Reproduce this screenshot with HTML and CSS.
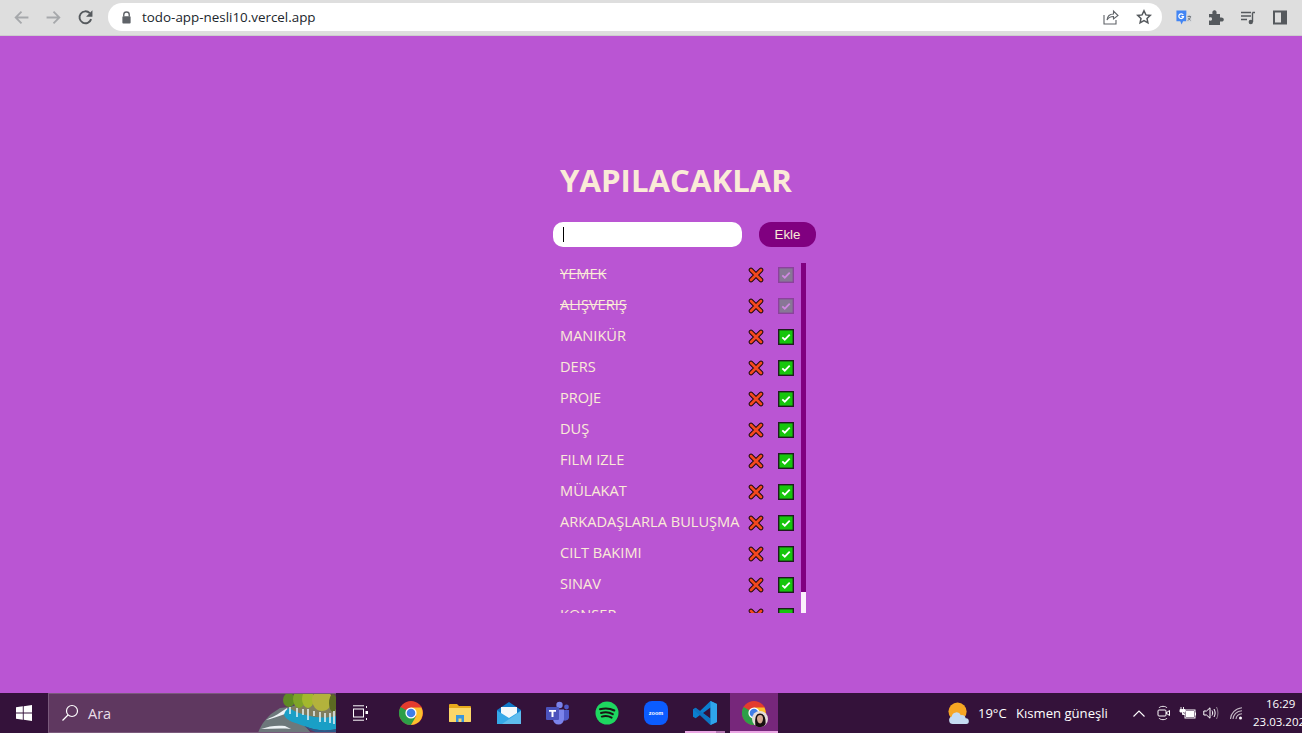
FILE: index.html
```html
<!DOCTYPE html>
<html lang="tr">
<head>
<meta charset="utf-8">
<title>Todo App</title>
<link rel="stylesheet" href="styles.css">
</head>
<body>
<svg class="defs" width="0" height="0" aria-hidden="true">
  <defs>
    <symbol id="x" viewBox="0 0 16 16">
      <path d="M3 3 13 13M13 3 3 13" fill="none" stroke="#1a0a0a" stroke-width="4.600" stroke-linecap="round"/>
      <path d="M3 3 13 13M13 3 3 13" fill="none" stroke="#f4481e" stroke-width="2.800" stroke-linecap="round"/>
    </symbol>
    <symbol id="check" viewBox="0 0 16 16">
      <rect x=".7" y=".7" width="14.600" height="14.600" fill="#16c60c" stroke="#1d1d1d" stroke-width="1.400"/>
      <path d="M4.300 8.300 6.800 10.700 11.700 5.600" fill="none" stroke="#fff" stroke-width="1.800"/>
    </symbol>
    <symbol id="chrome" viewBox="0 0 24 24">
      <circle cx="12" cy="12" r="12" fill="#e33b2e"/>
      <path d="M12 12 1.600 6A12 12 0 0 0 12 24l5-7z" fill="#2d9f48"/>
      <path d="M12 6.500h10.400A12 12 0 0 1 12 24l5.200-9z" fill="#fbc02d"/>
      <circle cx="12" cy="12" r="5.600" fill="#fff"/>
      <circle cx="12" cy="12" r="4.300" fill="#3f7ee8"/>
    </symbol>
  </defs>
</svg>

<div class="screen">
  <header class="toolbar">
    <div class="nav">
      <svg class="nav-icon" viewBox="0 0 16 16"><path d="M14.500 8H2.500M8 2.500 2.500 8 8 13.500" fill="none" stroke="#a6a8ab" stroke-width="1.700"/></svg>
      <svg class="nav-icon" viewBox="0 0 16 16"><path d="M1.500 8h12M8 2.500 13.500 8 8 13.500" fill="none" stroke="#a6a8ab" stroke-width="1.700"/></svg>
      <svg class="nav-icon" viewBox="0 0 16 16"><path d="M13.300 9.500A5.600 5.600 0 1 1 12 3.900" fill="none" stroke="#55595d" stroke-width="1.800"/><path d="M14.500 1.200v6h-6z" fill="#55595d"/></svg>
    </div>
    <div class="omnibox">
      <svg class="lock" viewBox="0 0 12 14"><path d="M3 6V4a3 3 0 0 1 6 0v2" fill="none" stroke="#5f6368" stroke-width="1.500"/><rect x="1.500" y="5.500" width="9" height="8" rx="1" fill="#5f6368"/></svg>
      <span class="url">todo-app-nesli10.vercel.app</span>
      <span class="spacer"></span>
      <svg class="omni-icon" viewBox="0 0 16 16"><path d="M1 6v9h12v-4" fill="none" stroke="#5f6368" stroke-width="1.100"/><path d="M4 11c.5-4 3.500-6 6.500-6V2L15 6.500 10.500 10V7.500C8 7.500 5.500 8.500 4 11z" fill="none" stroke="#5f6368" stroke-width="1.100"/></svg>
      <svg class="omni-icon" viewBox="0 0 16 16"><path d="m8 1.800 1.900 4.100 4.400.5-3.300 3 .9 4.400L8 11.600l-3.900 2.200.9-4.400-3.300-3 4.400-.5z" fill="none" stroke="#55595d" stroke-width="1.500"/></svg>
    </div>
    <div class="extensions">
      <svg class="ext" viewBox="0 0 16 18"><path d="M0 1.500h10.500V13H7l-1.500 3.500L4 13H0z" fill="#4285f4"/><path d="M10.500 6H16v8h-5.500z" fill="#d5d8dc"/><path d="M7.200 6.300A2.500 2.500 0 1 0 7.500 8H5.200" fill="none" stroke="#fff" stroke-width="1.300"/><path d="M11.800 8h3.500M13.500 7v1M15 8c-.3 2-1.800 3.500-3.200 4M12.500 9.500c.6 1 1.500 2 2.500 2.500" fill="none" stroke="#5f6368" stroke-width=".8"/></svg>
      <svg class="ext" viewBox="0 0 16 16"><path d="M1 4.500h3.500C4 1.500 5.300.8 6.500.8s2.500.7 2 3.700H12V8c3-.5 3.800.8 3.800 2s-.8 2.500-3.800 2v3.500H1V11c2.500.5 3-.3 3-1.500S3.500 7.500 1 8z" fill="#55595d"/></svg>
      <svg class="ext" viewBox="0 0 16 16"><path d="M1 3h10M1 6.500h10M1 10h6" stroke="#55595d" stroke-width="1.400"/><path d="M12.500 3H15M12.500 3v9.500" fill="none" stroke="#55595d" stroke-width="1.400"/><circle cx="10.800" cy="12.500" r="2.200" fill="#55595d"/></svg>
      <svg class="ext" viewBox="0 0 16 16"><path fill-rule="evenodd" d="M1 1h14v14H1zM3 3v10h6V3z" fill="#55595d"/></svg>
    </div>
  </header>

  <main class="page">
    <h1 class="title">YAPILACAKLAR</h1>
    <form class="add-form">
      <div class="field"><span class="caret"></span></div>
      <button class="add-btn" type="button">Ekle</button>
    </form>
    <div class="list-box">
      <ul class="todos">
        <li class="todo done"><span class="label">YEMEK</span><svg class="del"><use href="#x"/></svg><svg class="ok"><use href="#check"/></svg></li>
        <li class="todo done"><span class="label">ALIŞVERIŞ</span><svg class="del"><use href="#x"/></svg><svg class="ok"><use href="#check"/></svg></li>
        <li class="todo"><span class="label">MANIKÜR</span><svg class="del"><use href="#x"/></svg><svg class="ok"><use href="#check"/></svg></li>
        <li class="todo"><span class="label">DERS</span><svg class="del"><use href="#x"/></svg><svg class="ok"><use href="#check"/></svg></li>
        <li class="todo"><span class="label">PROJE</span><svg class="del"><use href="#x"/></svg><svg class="ok"><use href="#check"/></svg></li>
        <li class="todo"><span class="label">DUŞ</span><svg class="del"><use href="#x"/></svg><svg class="ok"><use href="#check"/></svg></li>
        <li class="todo"><span class="label">FILM IZLE</span><svg class="del"><use href="#x"/></svg><svg class="ok"><use href="#check"/></svg></li>
        <li class="todo"><span class="label">MÜLAKAT</span><svg class="del"><use href="#x"/></svg><svg class="ok"><use href="#check"/></svg></li>
        <li class="todo"><span class="label">ARKADAŞLARLA BULUŞMA</span><svg class="del"><use href="#x"/></svg><svg class="ok"><use href="#check"/></svg></li>
        <li class="todo"><span class="label">CILT BAKIMI</span><svg class="del"><use href="#x"/></svg><svg class="ok"><use href="#check"/></svg></li>
        <li class="todo"><span class="label">SINAV</span><svg class="del"><use href="#x"/></svg><svg class="ok"><use href="#check"/></svg></li>
        <li class="todo"><span class="label">KONSER</span><svg class="del"><use href="#x"/></svg><svg class="ok"><use href="#check"/></svg></li>
      </ul>
      <div class="scrollbar"><div class="thumb"></div></div>
    </div>
  </main>

  <footer class="taskbar">
    <div class="start">
      <svg class="win" viewBox="0 0 16 16"><path d="M0 2.300 6.800 1.300v6.200H0zM7.700 1.200 16 0v7.500H7.700zM0 8.400h6.800v6.300L0 13.700zM7.700 8.400H16V16l-8.300-1.200z" fill="#fff"/></svg>
    </div>
    <div class="search">
      <svg class="search-icon" viewBox="0 0 18 18"><circle cx="11" cy="7" r="5.500" fill="none" stroke="#fff" stroke-width="1.200"/><path d="M7 11 1.500 16.500" stroke="#fff" stroke-width="1.300"/></svg>
      <span class="search-text">Ara</span>
      <svg class="island" viewBox="0 0 78 39">
        <path d="M0 39C3 30 9 24 13 20l9-6 9-1 10 12 12 14z" fill="#6d787b"/>
        <path d="M8 26c5-3 10-4 15-8l6-4 2 5c-6 1-14 5-23 7zM3 35c8-3 16-4 24-3l6 3c-10-1-20 0-30 0z" fill="#eef3f6"/>
        <path d="M26 21C27 15 33 12 40 11l38-3v27c-12 3-22 1-32-3-8-3-18-5-20-11z" fill="#1a9fc6"/>
        <path d="M46 32c10 4 20 6 32 3v4H60c-5-2-10-4-14-7z" fill="#2a5a8a"/>
        <path d="M31 14c10-5 30-7 47-5v13c-12 3-30 2-47-8z" fill="#7f7d5e"/>
        <ellipse cx="31" cy="6" rx="6" ry="7" fill="#5f8a25"/>
        <ellipse cx="41" cy="5" rx="6" ry="9" fill="#7ea428"/>
        <ellipse cx="50" cy="5" rx="6" ry="9" fill="#a3b82e"/>
        <ellipse cx="64" cy="6" rx="10" ry="11" fill="#b3b23c"/>
        <ellipse cx="75" cy="9" rx="4" ry="9" fill="#5c6a22"/>
        <path d="M32 13v7M39 14v9M45 15v6M50 15v11M56 17v5M62 18v10M67 19v9M72 19v10M76 17v13" stroke="#e8f2f6" stroke-width="1.500"/>
      </svg>
    </div>
    <div class="task-view">
      <svg class="tv-icon" viewBox="0 0 16 16"><path d="M1 .8h11M1 15.200h11" stroke="#fff" stroke-width="1"/><rect x="1.500" y="4" width="10" height="8" fill="none" stroke="#fff"/><path d="M14.500 1v2M14.500 13v2" stroke="#fff"/><rect x="13.500" y="6" width="2.500" height="3" fill="#fff"/></svg>
    </div>
    <div class="apps">
      <div class="app"><svg class="app-icon"><use href="#chrome"/></svg></div>
      <div class="app">
        <svg class="app-icon" viewBox="0 0 24 24"><path d="M1 4a1 1 0 0 1 1-1h7l2 2h11a1 1 0 0 1 1 1v14a1 1 0 0 1-1 1H2a1 1 0 0 1-1-1z" fill="#e8a91c"/><path d="M1 7h22v13a1 1 0 0 1-1 1H2a1 1 0 0 1-1-1z" fill="#fcd768"/><path d="M8 21v-7h8v7h-2.500v-3.500h-3V21z" fill="#3a96dd"/></svg>
      </div>
      <div class="app">
        <svg class="app-icon" viewBox="0 0 24 24"><path d="M0 9 12 1l12 8v14H0z" fill="#0f78c8"/><path d="M4 6h16v9l-8 5-8-5z" fill="#f3f8fb"/><path d="M0 9.500 12 17l12-7.500V23H0z" fill="#35a8e8"/><path d="M24 10v13H5z" fill="#7ccaf2" opacity=".6"/></svg>
      </div>
      <div class="app">
        <svg class="app-icon" viewBox="0 0 24 24"><circle cx="13.500" cy="4" r="3.200" fill="#7b83eb"/><circle cx="20.500" cy="6" r="2.400" fill="#5059c9"/><path d="M16 9h7v8a4 4 0 0 1-7 1z" fill="#5059c9"/><path d="M7 8.500h11V18a5.500 5.500 0 0 1-11 0z" fill="#7b83eb"/><rect x="0" y="6" width="13" height="13" rx="1" fill="#4b53bc"/><path d="M3 9h7v1.700H7.500V16h-2v-5.300H3z" fill="#fff"/></svg>
      </div>
      <div class="app">
        <svg class="app-icon" viewBox="0 0 24 24"><circle cx="12" cy="12" r="11.500" fill="#1ed760"/><path d="M5 8.300c5-1.400 10-1 14.300 1.200M6 12c4-1.100 8.300-.8 11.800 1.200M6.800 15.600c3.500-.9 6.800-.6 9.800 1" fill="none" stroke="#191414" stroke-width="2" stroke-linecap="round"/></svg>
      </div>
      <div class="app">
        <svg class="app-icon" viewBox="0 0 24 24"><rect width="24" height="24" rx="8" fill="#0b5cff"/><text class="zoom-word" x="12" y="14">zoom</text></svg>
      </div>
      <div class="app pinned-open">
        <svg class="app-icon" viewBox="0 0 24 24"><path d="M17.500 0 24 3v18l-6.500 3L7 14l-4.300 3.300L0 15.800V8.200L2.700 6.700 7 10z" fill="#0a7fd0"/><path d="M17.500 6.500v11L10 12z" fill="#34123a"/><path d="M17.500 0 24 3v18l-6.500 3z" fill="#2fa4ec"/><path d="M2.700 6.700 17.500 18v6L0 8.200z" fill="#0f6cb8" opacity=".55"/></svg>
      </div>
      <div class="app active">
        <span class="chrome-wrap">
          <svg class="app-icon"><use href="#chrome"/></svg>
          <svg class="avatar" viewBox="0 0 16 16"><circle cx="8" cy="8" r="8" fill="#e4dcd8"/><path d="M3.500 15C2.500 8 3.500 2.500 8 2.500s6 5 5.500 10.500c-1 2-3 3-5 3-2.500 0-4-.5-5-1z" fill="#171010"/><path d="M5 7.500C5 5 6.500 4 8.300 4s2.700 1.500 2.700 3.500-1 5-2.900 5S5 10 5 7.500z" fill="#d6a893"/></svg>
        </span>
      </div>
    </div>
    <div class="tray">
      <svg class="weather" viewBox="0 0 24 24"><circle cx="11" cy="10" r="9.500" fill="#f6a623"/><path d="M6 23a4 4 0 0 1-1-7.800 5 5 0 0 1 9.500-1.500 4.500 4.500 0 0 1 5 3.300A3 3 0 0 1 20 23z" fill="#c5dcf2"/></svg>
      <span class="temp">19°C</span>
      <span class="forecast">Kısmen güneşli</span>
      <svg class="caret-up" viewBox="0 0 12 7"><path d="M.5 6.500 6 1l5.500 5.500" fill="none" stroke="#fff" stroke-width="1.100"/></svg>
      <svg class="meet" viewBox="0 0 13 16"><path d="M2 3C3 .8 9 .8 10 3M2 13c1 2.200 7 2.200 8 0" fill="none" stroke="#fff" stroke-width=".9"/><rect x="1" y="5" width="8" height="6" rx="1" fill="none" stroke="#fff"/><path d="m9 8 3.500-2.500v5z" fill="none" stroke="#fff"/></svg>
      <svg class="battery" viewBox="0 0 17 12"><path d="M2 0v2.500M4.500 0v2.500M1 2.500h5V5H1zM3.500 5v2.500H6" stroke="#fff" fill="#fff" stroke-width=".9"/><rect x="6" y="3" width="10" height="8" fill="none" stroke="#fff"/><rect x="7" y="4" width="8" height="6" fill="#fff"/><rect x="16" y="5.500" width="1" height="3" fill="#fff"/></svg>
      <svg class="volume" viewBox="0 0 16 14"><path d="M.8 5v4h2.700L7 12.200V1.800L3.500 5z" fill="none" stroke="#fff"/><path d="M9 4.500c.9 1.500.9 3.500 0 5M11 3c1.500 2.500 1.500 5.500 0 8" fill="none" stroke="#fff"/><path d="M13.500 1c1.900 3.500 1.900 8.500 0 12" fill="none" stroke="#8f7f90"/></svg>
      <svg class="wifi" viewBox="0 0 14 13"><path d="M.5 12C.8 6.500 5 1.500 12 .8M3 12C3.300 8 6.500 4 12 3.800M6 12c.2-2.500 2.400-5 6-5.300" fill="none" stroke="#c3b8c4" stroke-width="1.100"/><circle cx="10.500" cy="11" r="1.500" fill="#fff"/></svg>
      <div class="clock"><span class="time">16:29</span><span>23.03.2022</span></div>
    </div>
  </footer>
</div>
</body>
</html>
```

FILE: styles.css
```css
* { box-sizing: border-box; }
html, body { margin: 0; height: 100%; overflow: hidden; }
.defs { position: absolute; }
.screen {
  width: 1302px;
  height: 733px;
  display: flex;
  flex-direction: column;
  font-family: "Open Sans", "Noto Sans", sans-serif;
}

/* browser chrome */
.toolbar {
  height: 36px;
  flex: none;
  display: flex;
  background: #dedede;
  border-bottom: 1px solid #cdcdcd;
  padding: 3px 0 4px 13px;
  align-items: stretch;
}
.nav { display: flex; align-items: center; gap: 15px; width: 95px; flex: none; }
.nav-icon { width: 17px; height: 17px; flex: none; }
.omnibox {
  width: 1054px;
  flex: none;
  background: #fff;
  border-radius: 14px;
  display: flex;
  align-items: center;
  padding: 0 10px 0 13px;
}
.lock { width: 11px; height: 13px; flex: none; }
.url { margin-left: 10px; font-size: 13.400px; color: #20262c; }
.spacer { flex: 1; }
.omni-icon { width: 16px; height: 16px; margin-left: 17px; flex: none; }
.extensions { display: flex; align-items: center; gap: 16px; padding-left: 14px; }
.ext { width: 16px; height: 17px; flex: none; }

/* app */
.page {
  flex: 1;
  min-height: 0;
  background: #ba55d3;
  padding: 126px 0 0 553px;
  color: #faebd7;
}
.title {
  margin: 0 0 20px;
  padding-left: 7px;
  height: 40px;
  line-height: 36px;
  font-size: 31.200px;
  font-weight: 700;
  white-space: nowrap;
}
.add-form { display: flex; gap: 17px; height: 25px; }
.field {
  width: 189px;
  background: #fff;
  border-radius: 10px;
  padding: 5px 10px;
}
.caret { display: block; width: 1px; height: 15px; background: #000; }
.add-btn {
  width: 57px;
  border: 0;
  border-radius: 12px;
  background: #800080;
  color: #faebd7;
  font: 13.300px "Liberation Sans", Arial, sans-serif;
  padding: 0;
}
.list-box { display: flex; width: 253px; height: 350px; margin-top: 16px; }
.todos {
  list-style: none;
  margin: 0;
  padding: 0;
  width: 248px;
  height: 350px;
  overflow: hidden;
  flex: none;
}
.scrollbar { width: 5px; flex: none; height: 350px; background: #fbf0fb; }
.thumb { height: 329px; background: #800080; }
.todo {
  height: 24px;
  margin-bottom: 7px;
  display: flex;
  align-items: center;
  padding-left: 7px;
  font-size: 14.600px;
}
.label { width: 188px; white-space: nowrap; padding-bottom: 4px; }
.done .label { text-decoration: line-through; }
.del { width: 16px; height: 16px; flex: none; }
.ok { width: 16px; height: 16px; flex: none; margin-left: 14px; }
.done .ok { opacity: .3; }

/* taskbar */
.taskbar {
  height: 40px;
  flex: none;
  background: #34123a;
  display: flex;
  color: #fff;
  align-items: stretch;
}
.start { width: 48px; display: flex; align-items: center; justify-content: center; flex: none; }
.win { width: 16px; height: 16px; }
.search {
  width: 288px;
  flex: none;
  background: #5f3860;
  border: 1px solid #7a5a7c;
  border-width: 1px 0 1px 1px;
  display: flex;
  align-items: center;
  padding-left: 12px;
  overflow: hidden;
  position: relative;
}
.search-icon { width: 18px; height: 18px; flex: none; }
.search-text { margin-left: 9px; font-size: 14.500px; color: #e8dfe8; }
.island { position: absolute; right: 0; top: 0; width: 78px; height: 39px; }
.task-view { width: 50px; display: flex; align-items: center; justify-content: center; flex: none; }
.tv-icon { width: 16px; height: 16px; margin-right: 3px; }
.apps { display: flex; flex: none; }
.app {
  width: 49px;
  display: flex;
  align-items: center;
  justify-content: center;
  position: relative;
}
.app-icon { width: 24px; height: 24px; display: block; }
.zoom-word { font: 700 5.500px "Liberation Sans", sans-serif; fill: #fff; text-anchor: middle; }
.pinned-open::after {
  content: "";
  position: absolute;
  left: 5px; right: 4px; bottom: 0;
  height: 2px;
  background: linear-gradient(to right, #eaa6e4 0 31px, #b678b4 31px);
}
.active { width: 48px; margin-left: 1px; background: #77277b; }
.active::after {
  content: "";
  position: absolute;
  left: 0; right: 0; bottom: 0;
  height: 2px;
  background: #eaa6e4;
}
.chrome-wrap { position: relative; display: block; width: 24px; height: 24px; }
.avatar { position: absolute; right: -2px; bottom: -2px; width: 16px; height: 16px; }

.tray { flex: 1; display: flex; align-items: center; padding-left: 169px; min-width: 0; overflow: hidden; }
.weather { width: 23px; height: 23px; flex: none; }
.temp { margin-left: 8px; font-size: 13px; flex: none; width: 28px; white-space: nowrap; }
.forecast { margin-left: 10px; font-size: 13.100px; flex: none; width: 93px; white-space: nowrap; }
.caret-up { width: 12px; height: 7px; margin-left: 24px; flex: none; }
.meet { width: 13px; height: 16px; margin-left: 12px; flex: none; }
.battery { width: 17px; height: 12px; margin-left: 9px; flex: none; }
.volume { width: 16px; height: 14px; margin-left: 7px; flex: none; }
.wifi { width: 14px; height: 13px; margin-left: 11px; flex: none; }
.clock {
  margin-left: 9px;
  font-size: 11.500px;
  line-height: 18px;
  display: flex;
  flex-direction: column;
  align-items: flex-start;
  flex: none;
  white-space: nowrap;
}
.time { margin-left: 13px; }
```
